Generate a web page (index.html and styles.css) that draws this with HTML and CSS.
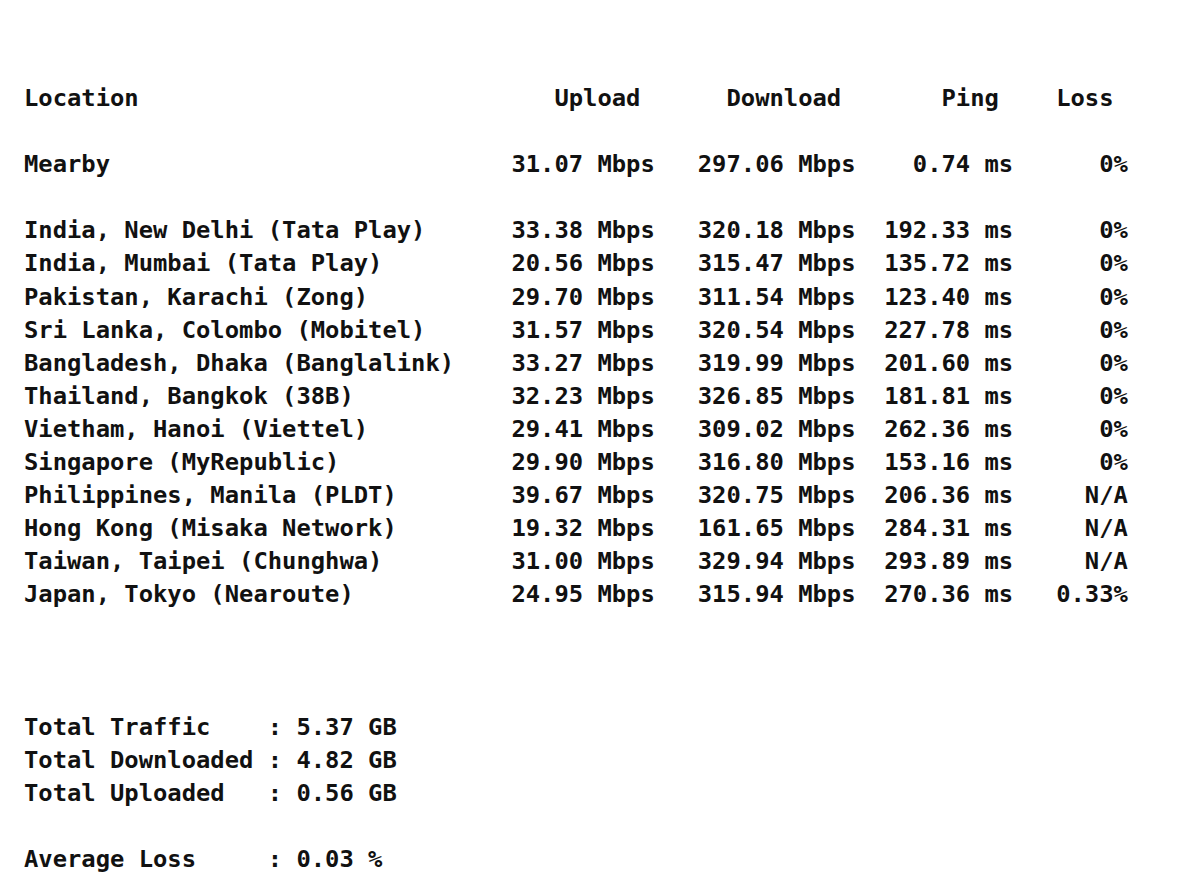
FILE: index.html
```html
<!DOCTYPE html>
<html lang="en">
<head>
    <meta charset="UTF-8">
    <meta name="viewport" content="width=device-width, initial-scale=1.0">
    <title>Speed test results</title>
    <link rel="stylesheet" href="styles.css">
</head>
<body>
    <div class="report">
        <div class="row head gap">
            <span class="loc">Location</span>
            <span>Upload</span>
            <span>Download</span>
            <span>Ping</span>
            <span>Loss</span>
        </div>
        <div class="row gap">
            <span class="loc">Mearby</span>
            <span>31.07 Mbps</span>
            <span>297.06 Mbps</span>
            <span>0.74 ms</span>
            <span>0%</span>
        </div>
        <div class="row">
            <span class="loc">India, New Delhi (Tata Play)</span>
            <span>33.38 Mbps</span>
            <span>320.18 Mbps</span>
            <span>192.33 ms</span>
            <span>0%</span>
        </div>
        <div class="row">
            <span class="loc">India, Mumbai (Tata Play)</span>
            <span>20.56 Mbps</span>
            <span>315.47 Mbps</span>
            <span>135.72 ms</span>
            <span>0%</span>
        </div>
        <div class="row">
            <span class="loc">Pakistan, Karachi (Zong)</span>
            <span>29.70 Mbps</span>
            <span>311.54 Mbps</span>
            <span>123.40 ms</span>
            <span>0%</span>
        </div>
        <div class="row">
            <span class="loc">Sri Lanka, Colombo (Mobitel)</span>
            <span>31.57 Mbps</span>
            <span>320.54 Mbps</span>
            <span>227.78 ms</span>
            <span>0%</span>
        </div>
        <div class="row">
            <span class="loc">Bangladesh, Dhaka (Banglalink)</span>
            <span>33.27 Mbps</span>
            <span>319.99 Mbps</span>
            <span>201.60 ms</span>
            <span>0%</span>
        </div>
        <div class="row">
            <span class="loc">Thailand, Bangkok (38B)</span>
            <span>32.23 Mbps</span>
            <span>326.85 Mbps</span>
            <span>181.81 ms</span>
            <span>0%</span>
        </div>
        <div class="row">
            <span class="loc">Vietham, Hanoi (Viettel)</span>
            <span>29.41 Mbps</span>
            <span>309.02 Mbps</span>
            <span>262.36 ms</span>
            <span>0%</span>
        </div>
        <div class="row">
            <span class="loc">Singapore (MyRepublic)</span>
            <span>29.90 Mbps</span>
            <span>316.80 Mbps</span>
            <span>153.16 ms</span>
            <span>0%</span>
        </div>
        <div class="row">
            <span class="loc">Philippines, Manila (PLDT)</span>
            <span>39.67 Mbps</span>
            <span>320.75 Mbps</span>
            <span>206.36 ms</span>
            <span>N/A</span>
        </div>
        <div class="row">
            <span class="loc">Hong Kong (Misaka Network)</span>
            <span>19.32 Mbps</span>
            <span>161.65 Mbps</span>
            <span>284.31 ms</span>
            <span>N/A</span>
        </div>
        <div class="row">
            <span class="loc">Taiwan, Taipei (Chunghwa)</span>
            <span>31.00 Mbps</span>
            <span>329.94 Mbps</span>
            <span>293.89 ms</span>
            <span>N/A</span>
        </div>
        <div class="row">
            <span class="loc">Japan, Tokyo (Nearoute)</span>
            <span>24.95 Mbps</span>
            <span>315.94 Mbps</span>
            <span>270.36 ms</span>
            <span>0.33%</span>
        </div>
    </div>

    <div class="totals">
        <div class="stat"><span class="label">Total Traffic</span><span>: 5.37 GB</span></div>
        <div class="stat"><span class="label">Total Downloaded</span><span>: 4.82 GB</span></div>
        <div class="stat gap"><span class="label">Total Uploaded</span><span>: 0.56 GB</span></div>
        <div class="stat"><span class="label">Average Loss</span><span>: 0.03 %</span></div>
    </div>
</body>
</html>
```

FILE: styles.css
```css
/* terminal style output, one row = one 33px line */
body{
    margin: 0;
    padding: 82px 0 0 24px;
    background: #fff;
    color: #111;
    font-family: "DejaVu Sans Mono", "Liberation Mono", monospace;
    font-size: 23.82px;
    font-weight: bold;
    line-height: 33.1px;
}

.row{
    display: grid;
    grid-template-columns: 34ch 10ch 14ch 11ch 8ch;
}
.row span{ text-align: right; white-space: pre;}
.row .loc{ text-align: left;}

/* headers sit one column in from the data */
.head span{ padding-right: 1ch;}
.head .loc{ padding-right: 0;}

/* blank line below */
.gap{ margin-bottom: 33.1px;}

.totals{ margin-top: 99.3px;}
.stat{
    display: grid;
    grid-template-columns: 17ch auto;
    white-space: pre;
}
```
